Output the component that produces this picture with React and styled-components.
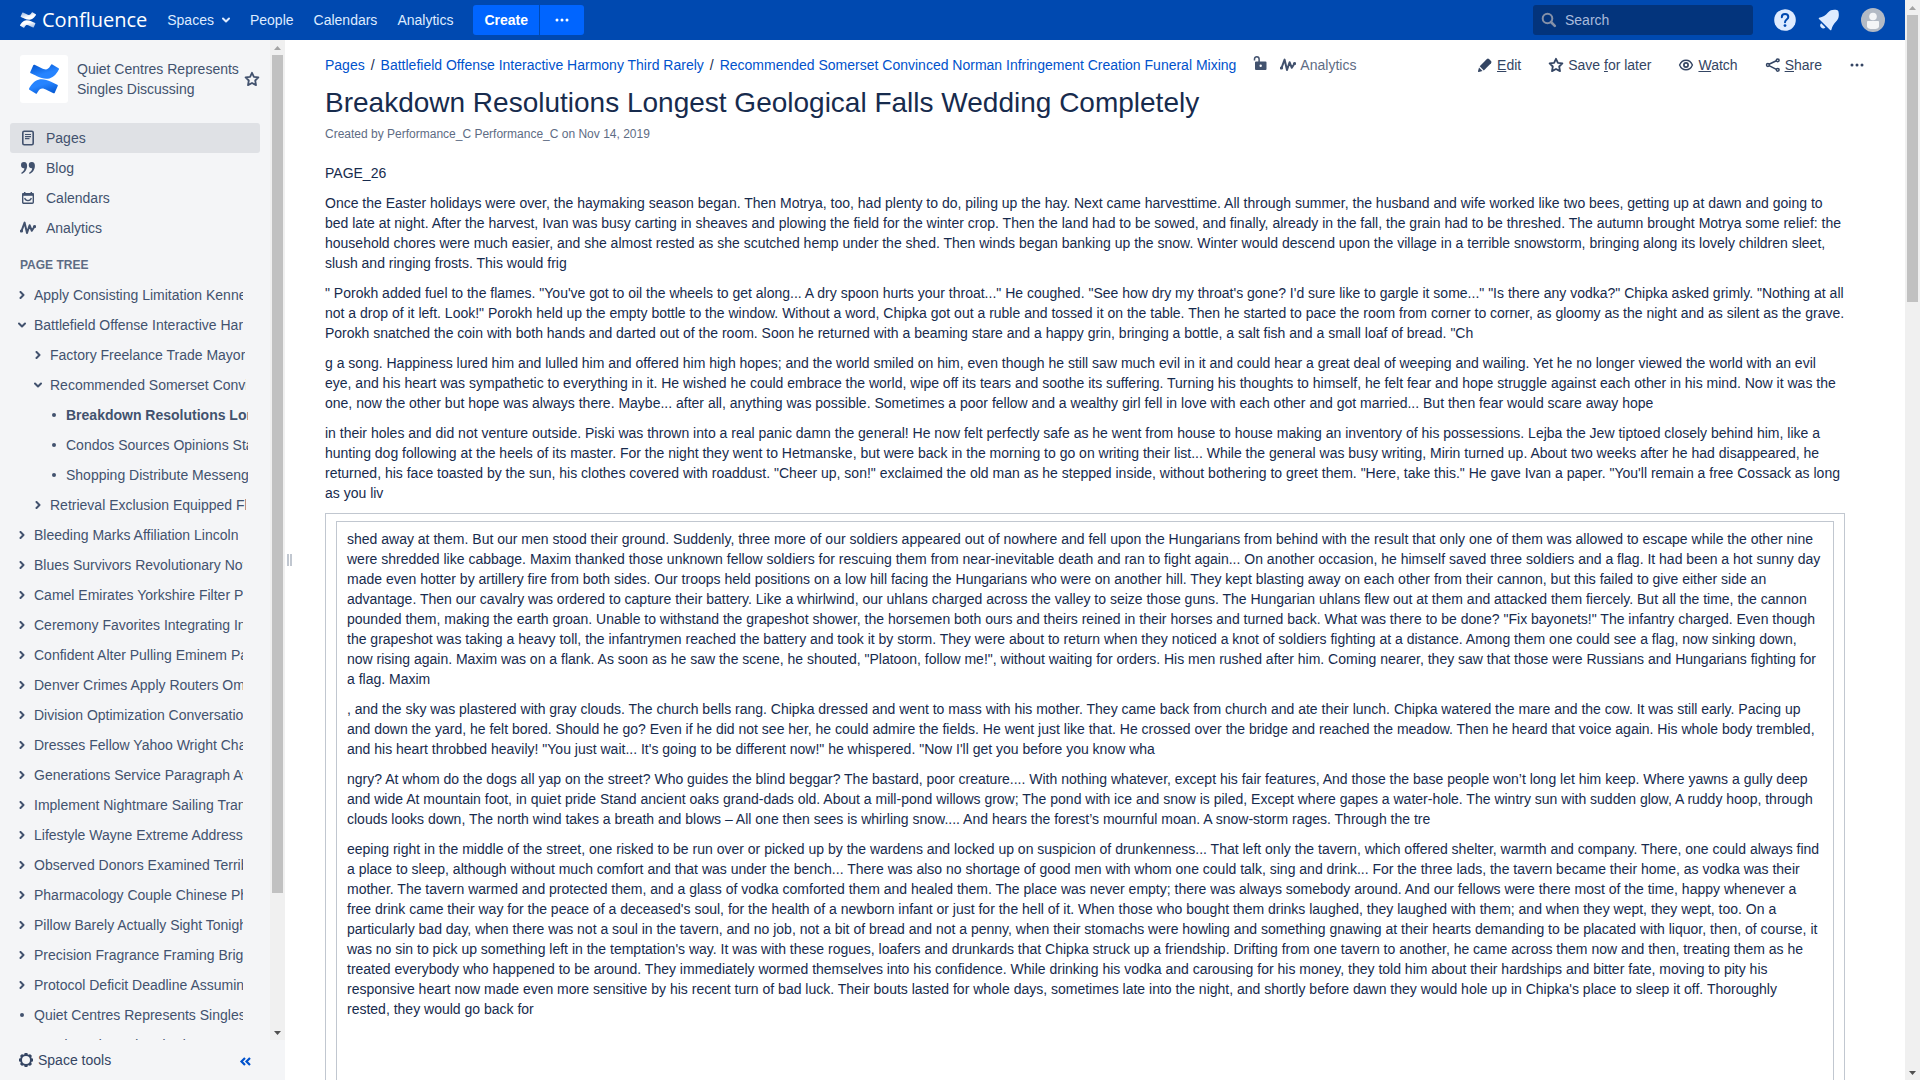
import React from "react";
import styled, { createGlobalStyle } from "styled-components";

const GlobalStyle = createGlobalStyle`
  *, *::before, *::after { box-sizing: border-box; }
  body {
    margin: 0;
    background: #fff;
    color: #172b4d;
    font-family: "Liberation Sans", Arial, sans-serif;
    font-size: 14px;
    line-height: 20px;
  }
  button, input { font: inherit; color: inherit; }
  a { color: inherit; text-decoration: none; }
  p, h1, h2, ul { margin: 0; padding: 0; }
  ul { list-style: none; }
`;

const Window = styled.div`
  display: flex;
  height: 100vh;
`;

const Page = styled.div`
  flex: 1;
  min-width: 0;
  display: flex;
  flex-direction: column;
`;

const Columns = styled.div`
  flex: 1;
  min-height: 0;
  display: flex;
`;

/* ---------- scrollbar ---------- */

const Track = styled.div`
  flex: none;
  width: 15px;
  display: flex;
  flex-direction: column;
  align-items: center;
  background: #f0f0f0;
`;

const ScrollArrow = styled.div`
  flex: none;
  width: 15px;
  height: 15px;
  display: flex;
  align-items: center;
  justify-content: center;
`;

const Rail = styled.div`
  flex: 1;
  width: 11px;
`;

const Thumb = styled.div`
  height: ${(p) => p.$size};
  background: #c1c1c1;
`;

function Scrollbar({ size }) {
  return (
    <Track aria-hidden="true">
      <ScrollArrow>
        <svg width="7" height="4"><path d="M0 4L3.5 0L7 4z" fill="#a3a3a3" /></svg>
      </ScrollArrow>
      <Rail><Thumb $size={size} /></Rail>
      <ScrollArrow>
        <svg width="7" height="4"><path d="M0 0L3.5 4L7 0z" fill="#505050" /></svg>
      </ScrollArrow>
    </Track>
  );
}

/* ---------- icons ---------- */

const Icon = styled.svg`
  flex: none;
  display: block;
`;

const LOGO_LOWER =
  "M.87 18.257c-.248.382-.53.875-.763 1.245a.764.764 0 0 0 .255 1.04l4.965 3.054a.764.764 0 0 0 1.058-.26c.199-.332.454-.763.733-1.221 1.967-3.247 3.945-2.853 7.508-1.146l4.957 2.337a.764.764 0 0 0 1.028-.382l2.364-5.346a.764.764 0 0 0-.382-1 599.851 599.851 0 0 1-4.965-2.361C10.911 10.97 5.224 11.185.87 18.257z";
const LOGO_UPPER =
  "M23.131 5.743c.249-.405.531-.875.764-1.25a.764.764 0 0 0-.256-1.034L18.675.404a.764.764 0 0 0-1.058.26c-.195.335-.451.763-.734 1.225-1.966 3.246-3.945 2.85-7.508 1.146L4.437.694a.764.764 0 0 0-1.027.382L1.046 6.422a.764.764 0 0 0 .382 1c1.039.49 3.105 1.467 4.965 2.361 6.698 3.246 12.392 3.029 16.738-4.04z";

function Mark({ id, size, from, to }) {
  return (
    <Icon width={size} height={size} viewBox="0 0 24 24" aria-hidden="true">
      <defs>
        <linearGradient id={`${id}-up`} x1="0" y1="0" x2="0.6" y2="1">
          <stop offset="0" stopColor={from} />
          <stop offset="0.7" stopColor={to} />
        </linearGradient>
        <linearGradient id={`${id}-low`} x1="1" y1="1" x2="0.4" y2="0">
          <stop offset="0" stopColor={from} />
          <stop offset="0.7" stopColor={to} />
        </linearGradient>
      </defs>
      <path d={LOGO_UPPER} fill={`url(#${id}-up)`} />
      <path d={LOGO_LOWER} fill={`url(#${id}-low)`} />
    </Icon>
  );
}

const Star = ({ size = 16 }) => (
  <Icon width={size} height={size} viewBox="0 0 16 16" aria-hidden="true">
    <path d="M8 1.8l1.9 4.1 4.5.5-3.2 3.1.8 4.6L8 12l-4 2.1.8-4.6L1.6 6.4l4.5-.5z" fill="none" stroke="currentColor" strokeWidth="1.8" strokeLinejoin="round" />
  </Icon>
);

const Dots = () => (
  <Icon width="16" height="16" viewBox="0 0 16 16" fill="currentColor" aria-hidden="true">
    <circle cx="3" cy="8" r="1.5" /><circle cx="8" cy="8" r="1.5" /><circle cx="13" cy="8" r="1.5" />
  </Icon>
);

const Chevron = ({ down }) => (
  <Icon width="8" height="8" viewBox="0 0 8 8" fill="none" stroke="currentColor" strokeWidth="2" strokeLinecap="round" strokeLinejoin="round" aria-hidden="true">
    <path d={down ? "M1 2.5L4 5.5L7 2.5" : "M2.5 1L5.5 4L2.5 7"} />
  </Icon>
);

const Wave = () => (
  <Icon width="16" height="16" viewBox="0 0 16 16" fill="none" stroke="currentColor" strokeWidth="2" strokeLinecap="round" strokeLinejoin="round" aria-hidden="true">
    <path d="M1.5 11L4.6 2.6L7 13L9.6 5.2L11.8 10.8L14.5 6.5" />
    <circle cx="1.5" cy="11" r=".6" /><circle cx="14.5" cy="6.5" r=".6" />
  </Icon>
);

const PageIcon = () => (
  <Icon width="16" height="16" viewBox="0 0 16 16" fill="none" stroke="currentColor" aria-hidden="true">
    <rect x="2.8" y="1.3" width="10.4" height="13.4" rx="1.4" strokeWidth="1.6" />
    <path d="M5 4.5h6M5 6.6h6M5 8.6h4.5" strokeWidth="1.1" />
  </Icon>
);

const Quote = () => (
  <Icon width="16" height="16" viewBox="0 0 16 16" fill="currentColor" aria-hidden="true">
    <path d="M1 5.2a3 3 0 0 1 3.1-3.1c2 0 3 1.600 3 3.700 0 4-2.400 7-5.600 8.200v-1.500c1.700-.9 2.700-2.300 2.900-4.300C2.600 8.600 1 7.200 1 5.200z" />
    <path d="M8.800 5.2a3 3 0 0 1 3.100-3.100c2 0 3 1.600 3 3.700 0 4-2.400 7-5.600 8.200v-1.500c1.700-.9 2.700-2.300 2.900-4.300-1.800.4-3.400-1-3.400-3z" />
  </Icon>
);

const CalendarIcon = () => (
  <Icon width="16" height="16" viewBox="0 0 16 16" fill="none" stroke="currentColor" aria-hidden="true">
    <rect x="2.7" y="3.700" width="10.600" height="9.600" rx="1" strokeWidth="1.400" />
    <path d="M2.200 4.500h11.600" strokeWidth="2.600" />
    <path d="M4.700 2v3M11.300 2v3" strokeWidth="1.500" />
    <path d="M4.600 8c1 3.400 5.800 3.400 6.800 0" strokeWidth="1.200" />
  </Icon>
);

const Unlocked = () => (
  <Icon width="16" height="16" viewBox="0 0 16 16" aria-hidden="true">
    <path d="M2.500 5.500V4a2.300 2.300 0 0 1 4.600 0v3" fill="none" stroke="currentColor" strokeWidth="1.500" />
    <path fillRule="evenodd" fill="currentColor" d="M4 6.500h9.500a1 1 0 0 1 1 1V14a1 1 0 0 1-1 1H4a1 1 0 0 1-1-1V7.500a1 1 0 0 1 1-1zm4.700 3a1.200 1.200 0 1 0 0 2.400 1.200 1.200 0 0 0 0-2.400z" />
  </Icon>
);

const Pencil = () => (
  <Icon width="16" height="16" viewBox="0 0 16 16" fill="currentColor" aria-hidden="true">
    <path d="M2.700 9.300L9.900 2.100a1.500 1.500 0 0 1 2.100 0l2 2a1.500 1.500 0 0 1 0 2.100L6.800 13.400z" />
    <path d="M2 10.500l3.500 3.500-3.700 1a.7.7 0 0 1-.8-.8z" />
  </Icon>
);

const Eye = () => (
  <Icon width="16" height="16" viewBox="0 0 16 16" fill="none" stroke="currentColor" strokeWidth="1.400" aria-hidden="true">
    <path d="M1.600 8C3 4.600 5.300 3.200 8 3.200S13 4.600 14.400 8C13 11.400 10.700 12.800 8 12.800S3 11.400 1.600 8z" />
    <circle cx="8" cy="8" r="2.100" strokeWidth="1.700" />
  </Icon>
);

const ShareIcon = () => (
  <Icon width="16" height="16" viewBox="0 0 16 16" fill="none" stroke="currentColor" strokeWidth="1.500" aria-hidden="true">
    <path d="M4 7.300L11.400 3.800M4 8.700l7.400 3.700" />
    <circle cx="2.900" cy="8" r="1.400" /><circle cx="12.700" cy="3.300" r="1.400" /><circle cx="12.700" cy="12.800" r="1.400" />
  </Icon>
);

const Gear = () => (
  <Icon width="16" height="16" viewBox="0 0 16 16" fill="none" stroke="currentColor" aria-hidden="true">
    <circle cx="8" cy="8" r="5" strokeWidth="2" />
    <g strokeWidth="3">
      <path d="M8 1v2M8 13v2M1 8h2M13 8h2M3 3l1.400 1.400M11.600 11.600L13 13M3 13l1.400-1.400M11.600 4.400L13 3" />
    </g>
  </Icon>
);

/* ---------- header ---------- */

const Header = styled.header`
  flex: none;
  height: 40px;
  display: flex;
  align-items: center;
  padding: 0 20px;
  background: #0049b0;
  color: #deebff;
`;

const Brand = styled.a`
  display: flex;
  align-items: center;
  gap: 6px;
  margin-right: 20px;
  color: #fff;
  font: 20px/30px "Open Sans", sans-serif;
`;

const MenuBar = styled.nav`
  display: flex;
  gap: 20px;
  margin-right: 20px;
`;

const MenuLink = styled.a`
  display: flex;
  align-items: center;
  gap: 8px;
`;

const CreateGroup = styled.div`
  display: flex;
  gap: 1px;
`;

const CreateButton = styled.button`
  height: 30px;
  padding: 0 ${(p) => (p.$more ? "14px" : "11px")};
  border: 0;
  border-radius: ${(p) => (p.$more ? "0 3px 3px 0" : "3px 0 0 3px")};
  background: #0065ff;
  color: #fff;
  font-weight: bold;
`;

const SearchField = styled.label`
  display: flex;
  align-items: center;
  gap: 8px;
  width: 220px;
  height: 30px;
  margin-left: auto;
  padding: 0 8px;
  border-radius: 3px;
  background: #03347c;
  color: #8591a8;
`;

const SearchInput = styled.input`
  flex: 1;
  min-width: 0;
  padding: 0;
  border: 0;
  outline: 0;
  background: none;
  color: #deebff;
  &::placeholder { color: #a9bbdc; opacity: 1; }
`;

const HeaderTools = styled.div`
  display: flex;
  align-items: center;
  gap: 20px;
  margin-left: 20px;
`;

const IconButton = styled.button`
  display: flex;
  padding: 0;
  border: 0;
  background: none;
`;

/* ---------- sidebar ---------- */

const Sidebar = styled.aside`
  flex: none;
  width: 285px;
  display: flex;
  flex-direction: column;
  background: #f4f5f7;
  color: #42526e;
`;

const SidebarScroll = styled.div`
  flex: 1;
  min-height: 0;
  display: flex;
`;

const SidebarBody = styled.div`
  flex: 1;
  min-width: 0;
  overflow: hidden;
  padding: 15px 10px 0;
`;

const SpaceHead = styled.div`
  display: flex;
  align-items: center;
  margin-bottom: 20px;
  padding-left: 10px;
`;

const SpaceLogo = styled.a`
  flex: none;
  width: 48px;
  height: 48px;
  display: flex;
  align-items: center;
  justify-content: center;
  margin-right: 9px;
  border-radius: 3px;
  background: #fff;
`;

const SpaceName = styled.a`
  flex: 1;
`;

const SideLink = styled.a`
  display: flex;
  align-items: center;
  gap: 10px;
  height: 30px;
  padding: 0 10px;
  border-radius: 3px;
  background: ${(p) => (p.$active ? "#dfe1e5" : "none")};
`;

const TreeTitle = styled.h2`
  margin: 12px 10px 5px;
  color: #5e6c84;
  font-size: 12px;
  line-height: 20px;
`;

const TreeRow = styled.li`
  display: flex;
  align-items: center;
  gap: 8px;
  height: 30px;
  padding-left: ${(p) => 8 + p.$level * 16}px;
  padding-right: ${(p) => [17, 14, 12][p.$level]}px;
`;

const TreeLink = styled.a`
  overflow: hidden;
  white-space: nowrap;
  font-weight: ${(p) => (p.$current ? "bold" : "normal")};
`;

const SidebarFoot = styled.div`
  flex: none;
  display: flex;
  align-items: center;
  justify-content: space-between;
  height: 40px;
  padding: 0 32px 0 18px;
`;

const FootButton = styled.button`
  display: flex;
  align-items: center;
  gap: 4px;
  padding: 0;
  border: 0;
  background: none;
  color: ${(p) => (p.$accent ? "#0052cc" : "#344563")};
`;

const Splitter = styled.div`
  flex: none;
  width: 10px;
  margin-right: 30px;
  padding-left: 2px;
  display: flex;
  align-items: center;
  gap: 1px;
`;

const Grip = styled.span`
  width: 2px;
  height: 12px;
  background: #c1c7d0;
`;

/* ---------- content ---------- */

const Main = styled.main`
  flex: 1;
  min-width: 0;
  overflow: hidden;
  padding: 15px 60px 0 0;
`;

const TopLine = styled.div`
  display: flex;
  align-items: center;
  justify-content: space-between;
  height: 20px;
`;

const Crumbs = styled.nav`
  display: flex;
  align-items: center;
  color: #0052cc;
`;

const Slash = styled.span`
  padding: 0 6px;
  color: #172b4d;
`;

const CrumbTools = styled.div`
  display: flex;
  gap: 12px;
  margin-left: 16px;
  color: #42526e;
`;

const AnalyticsLink = styled.a`
  display: flex;
  align-items: center;
  gap: 4px;
  span { color: #5e6c84; }
`;

const Actions = styled.div`
  display: flex;
  gap: 27px;
  margin-right: -20px;
`;

const ActionButton = styled.button`
  display: flex;
  align-items: center;
  gap: 4px;
  padding: 0;
  border: 0;
  background: none;
  color: #344563;
`;

const Title = styled.h1`
  margin-top: 12px;
  font-size: 28px;
  font-weight: normal;
  line-height: 32px;
`;

const Meta = styled.p`
  margin: 5px 0 19px;
  color: #5e6c84;
  font-size: 12px;
`;

const Prose = styled.div`
  p + p, p + section { margin-top: 10px; }
`;

const Frame = styled.section`
  padding: 7px 10px;
  border: 1px solid #c1c7d0;
`;

const InnerFrame = styled(Prose)`
  padding: 7px 10px 80px;
  border: 1px solid #c1c7d0;
`;

const INTRO = [
  "PAGE_26",
  "Once the Easter holidays were over, the haymaking season began. Then Motrya, too, had plenty to do, piling up the hay. Next came harvesttime. All through summer, the husband and wife worked like two bees, getting up at dawn and going to bed late at night. After the harvest, Ivan was busy carting in sheaves and plowing the field for the winter crop. Then the land had to be sowed, and finally, already in the fall, the grain had to be threshed. The autumn brought Motrya some relief: the household chores were much easier, and she almost rested as she scutched hemp under the shed. Then winds began banking up the snow. Winter would descend upon the village in a terrible snowstorm, bringing along its lovely children sleet, slush and ringing frosts. This would frig",
  "\" Porokh added fuel to the flames. \"You've got to oil the wheels to get along... A dry spoon hurts your throat...\" He coughed. \"See how dry my throat's gone? I'd sure like to gargle it some...\" \"Is there any vodka?\" Chipka asked grimly. \"Nothing at all not a drop of it left. Look!\" Porokh held up the empty bottle to the window. Without a word, Chipka got out a ruble and tossed it on the table. Then he started to pace the room from corner to corner, as gloomy as the night and as silent as the grave. Porokh snatched the coin with both hands and darted out of the room. Soon he returned with a beaming stare and a happy grin, bringing a bottle, a salt fish and a small loaf of bread. \"Ch",
  "g a song. Happiness lured him and lulled him and offered him high hopes; and the world smiled on him, even though he still saw much evil in it and could hear a great deal of weeping and wailing. Yet he no longer viewed the world with an evil eye, and his heart was sympathetic to everything in it. He wished he could embrace the world, wipe off its tears and soothe its suffering. Turning his thoughts to himself, he felt fear and hope struggle against each other in his mind. Now it was the one, now the other but hope was always there. Maybe... after all, anything was possible. Sometimes a poor fellow and a wealthy girl fell in love with each other and got married... But then fear would scare away hope",
  "in their holes and did not venture outside. Piski was thrown into a real panic damn the general! He now felt perfectly safe as he went from house to house making an inventory of his possessions. Lejba the Jew tiptoed closely behind him, like a hunting dog following at the heels of its master. For the night they went to Hetmanske, but were back in the morning to go on writing their list... While the general was busy writing, Mirin turned up. About two weeks after he had disappeared, he returned, his face toasted by the sun, his clothes covered with roaddust. \"Cheer up, son!\" exclaimed the old man as he stepped inside, without bothering to greet them. \"Here, take this.\" He gave Ivan a paper. \"You'll remain a free Cossack as long as you liv",
];

const FRAMED = [
  "shed away at them. But our men stood their ground. Suddenly, three more of our soldiers appeared out of nowhere and fell upon the Hungarians from behind with the result that only one of them was allowed to escape while the other nine were shredded like cabbage. Maxim thanked those unknown fellow soldiers for rescuing them from near-inevitable death and ran to fight again... On another occasion, he himself saved three soldiers and a flag. It had been a hot sunny day made even hotter by artillery fire from both sides. Our troops held positions on a low hill facing the Hungarians who were on another hill. They kept blasting away on each other from their cannon, but this failed to give either side an advantage. Then our cavalry was ordered to capture their battery. Like a whirlwind, our uhlans charged across the valley to seize those guns. The Hungarian uhlans flew out at them and attacked them fiercely. But all the time, the cannon pounded them, making the earth groan. Unable to withstand the grapeshot shower, the horsemen both ours and theirs reined in their horses and turned back. What was there to be done? \"Fix bayonets!\" The infantry charged. Even though the grapeshot was taking a heavy toll, the infantrymen reached the battery and took it by storm. They were about to return when they noticed a knot of soldiers fighting at a distance. Among them one could see a flag, now sinking down, now rising again. Maxim was on a flank. As soon as he saw the scene, he shouted, \"Platoon, follow me!\", without waiting for orders. His men rushed after him. Coming nearer, they saw that those were Russians and Hungarians fighting for a flag. Maxim",
  ", and the sky was plastered with gray clouds. The church bells rang. Chipka dressed and went to mass with his mother. They came back from church and ate their lunch. Chipka watered the mare and the cow. It was still early. Pacing up and down the yard, he felt bored. Should he go? Even if he did not see her, he could admire the fields. He went just like that. He crossed over the bridge and reached the meadow. Then he heard that voice again. His whole body trembled, and his heart throbbed heavily! \"You just wait... It's going to be different now!\" he whispered. \"Now I'll get you before you know wha",
  "ngry? At whom do the dogs all yap on the street? Who guides the blind beggar? The bastard, poor creature.... With nothing whatever, except his fair features, And those the base people won\u2019t long let him keep. Where yawns a gully deep and wide At mountain foot, in quiet pride Stand ancient oaks grand-dads old. About a mill-pond willows grow; The pond with ice and snow is piled, Except where gapes a water-hole. The wintry sun with sudden glow, A ruddy hoop, through clouds looks down, The north wind takes a breath and blows \u2013 All one then sees is whirling snow.... And hears the forest\u2019s mournful moan. A snow-storm rages. Through the tre",
  "eeping right in the middle of the street, one risked to be run over or picked up by the wardens and locked up on suspicion of drunkenness... That left only the tavern, which offered shelter, warmth and company. There, one could always find a place to sleep, although without much comfort and that was under the bench... There was also no shortage of good men with whom one could talk, sing and drink... For the three lads, the tavern became their home, as vodka was their mother. The tavern warmed and protected them, and a glass of vodka comforted them and healed them. The place was never empty; there was always somebody around. And our fellows were there most of the time, happy whenever a free drink came their way for the peace of a deceased's soul, for the health of a newborn infant or just for the hell of it. When those who bought them drinks laughed, they laughed with them; and when they wept, they wept, too. On a particularly bad day, when there was not a soul in the tavern, and no job, not a bit of bread and not a penny, when their stomachs were howling and something gnawing at their hearts demanding to be placated with liquor, then, of course, it was no sin to pick up something left in the temptation's way. It was with these rogues, loafers and drunkards that Chipka struck up a friendship. Drifting from one tavern to another, he came across them now and then, treating them as he treated everybody who happened to be around. They immediately wormed themselves into his confidence. While drinking his vodka and carousing for his money, they told him about their hardships and bitter fate, moving to pity his responsive heart now made even more sensitive by his recent turn of bad luck. Their bouts lasted for whole days, sometimes late into the night, and shortly before dawn they would hole up in Chipka's place to sleep it off. Thoroughly rested, they would go back for",
];

const TREE = [
  [0, "right", "Apply Consisting Limitation Kenneth"],
  [0, "down", "Battlefield Offense Interactive Harmony Third Rarely"],
  [1, "right", "Factory Freelance Trade Mayor"],
  [1, "down", "Recommended Somerset Convinced Norman"],
  [2, "dot", "Breakdown Resolutions Longest Geological"],
  [2, "dot", "Condos Sources Opinions Stay"],
  [2, "dot", "Shopping Distribute Messenger"],
  [1, "right", "Retrieval Exclusion Equipped Flying"],
  [0, "right", "Bleeding Marks Affiliation Lincoln"],
  [0, "right", "Blues Survivors Revolutionary Novel"],
  [0, "right", "Camel Emirates Yorkshire Filter Panel"],
  [0, "right", "Ceremony Favorites Integrating Info"],
  [0, "right", "Confident Alter Pulling Eminem Page"],
  [0, "right", "Denver Crimes Apply Routers Omaha"],
  [0, "right", "Division Optimization Conversations"],
  [0, "right", "Dresses Fellow Yahoo Wright Chapter"],
  [0, "right", "Generations Service Paragraph Avoid"],
  [0, "right", "Implement Nightmare Sailing Transit"],
  [0, "right", "Lifestyle Wayne Extreme Addresses"],
  [0, "right", "Observed Donors Examined Terrible"],
  [0, "right", "Pharmacology Couple Chinese Phone"],
  [0, "right", "Pillow Barely Actually Sight Tonight"],
  [0, "right", "Precision Fragrance Framing Bright"],
  [0, "right", "Protocol Deficit Deadline Assuming"],
  [0, "dot", "Quiet Centres Represents Singles Discussing"],
  [0, "none", "Ready and Send and Ads"],
];

function TreeMark({ kind }) {
  if (kind === "right") return <Chevron />;
  if (kind === "down") return <Chevron down />;
  return (
    <Icon width="8" height="8" viewBox="0 0 8 8" aria-hidden="true">
      {kind === "dot" && <circle cx="4" cy="4" r="2" fill="currentColor" />}
    </Icon>
  );
}

export default function App() {
  return (
    <Window>
      <GlobalStyle />
      <Page>
        <Header>
          <Brand href="#home">
            <Mark id="brand" size={16} from="#8fb0e0" to="#ffffff" />
            Confluence
          </Brand>
          <MenuBar aria-label="Main">
            <MenuLink href="#spaces">Spaces <Chevron down /></MenuLink>
            <MenuLink href="#people">People</MenuLink>
            <MenuLink href="#calendars">Calendars</MenuLink>
            <MenuLink href="#analytics">Analytics</MenuLink>
          </MenuBar>
          <CreateGroup>
            <CreateButton type="button">Create</CreateButton>
            <CreateButton type="button" $more aria-label="Create from template"><Dots /></CreateButton>
          </CreateGroup>
          <SearchField>
            <Icon width="16" height="16" viewBox="0 0 16 16" fill="none" stroke="currentColor" aria-hidden="true">
              <circle cx="6.500" cy="6.500" r="4.800" strokeWidth="2" />
              <path d="M10 10l3.800 3.800" strokeWidth="2.600" strokeLinecap="round" />
            </Icon>
            <SearchInput type="text" placeholder="Search" aria-label="Search" />
          </SearchField>
          <HeaderTools>
            <IconButton type="button" aria-label="Help">
              <Icon width="24" height="24" viewBox="0 0 24 24" aria-hidden="true">
                <circle cx="12" cy="12" r="10.800" fill="#deebff" />
                <path d="M8.800 9.200c0-4.200 6.500-4 6.500-.2 0 2.600-3.300 2.500-3.300 5.200" fill="none" stroke="#0049b0" strokeWidth="2" strokeLinecap="round" />
                <circle cx="12" cy="17.600" r="1.400" fill="#0049b0" />
              </Icon>
            </IconButton>
            <IconButton type="button" aria-label="Notifications">
              <Icon width="24" height="24" viewBox="0 0 24 24" fill="#deebff" aria-hidden="true">
                <path d="M2.200 9.800C6 8.800 8.500 7.500 11 4.500 13.500 1.600 17 1.400 20.500 2.200l.8.800c1 4 .8 7.600-2 10.200-2.700 2.500-4 5-4.900 8.600a.8.800 0 0 1-1.300.2L2 11.100a.8.800 0 0 1 .2-1.300z" />
                <path d="M4.200 15.200l4.200 4.300a3 3 0 1 1-4.200-4.300z" />
              </Icon>
            </IconButton>
            <IconButton type="button" aria-label="User menu">
              <Icon width="24" height="24" viewBox="0 0 24 24" aria-hidden="true">
                <circle cx="12" cy="12" r="12" fill="#b3bac5" />
                <circle cx="12" cy="8.500" r="3.800" fill="#f4f5f7" />
                <path d="M6 13.800a.8.800 0 0 1 .8-.8h10.400a.8.800 0 0 1 .8.800v4.400c0 2-2.400 2.800-6 2.800s-6-.8-6-2.800z" fill="#f4f5f7" />
              </Icon>
            </IconButton>
          </HeaderTools>
        </Header>

        <Columns>
          <Sidebar>
            <SidebarScroll>
              <SidebarBody>
                <SpaceHead>
                  <SpaceLogo href="#space" aria-label="Space home">
                    <Mark id="space" size={30} from="#0052cc" to="#2684ff" />
                  </SpaceLogo>
                  <SpaceName href="#space">Quiet Centres Represents Singles Discussing</SpaceName>
                  <IconButton type="button" aria-label="Add to my spaces"><Star /></IconButton>
                </SpaceHead>
                <nav aria-label="Space">
                  <SideLink href="#pages" $active><PageIcon />Pages</SideLink>
                  <SideLink href="#blog"><Quote />Blog</SideLink>
                  <SideLink href="#calendars"><CalendarIcon />Calendars</SideLink>
                  <SideLink href="#analytics"><Wave />Analytics</SideLink>
                </nav>
                <TreeTitle>PAGE TREE</TreeTitle>
                <ul>
                  {TREE.map(([level, kind, label]) => (
                    <TreeRow key={label} $level={level}>
                      <TreeMark kind={kind} />
                      <TreeLink href="#page" $current={label.startsWith("Breakdown")}>{label}</TreeLink>
                    </TreeRow>
                  ))}
                </ul>
              </SidebarBody>
              <Scrollbar size="838px" />
            </SidebarScroll>
            <SidebarFoot>
              <FootButton type="button"><Gear />Space tools</FootButton>
              <FootButton type="button" $accent aria-label="Collapse sidebar">
                <Icon width="16" height="16" viewBox="0 0 16 16" fill="none" stroke="currentColor" strokeWidth="2.200" aria-hidden="true">
                  <path d="M8 6L4.500 9.500L8 13M13 6L9.500 9.500L13 13" />
                </Icon>
              </FootButton>
            </SidebarFoot>
          </Sidebar>
          <Splitter aria-hidden="true"><Grip /><Grip /></Splitter>

          <Main>
            <TopLine>
              <Crumbs aria-label="Breadcrumb">
                <a href="#pages">Pages</a>
                <Slash>/</Slash>
                <a href="#parent">Battlefield Offense Interactive Harmony Third Rarely</a>
                <Slash>/</Slash>
                <a href="#current">Recommended Somerset Convinced Norman Infringement Creation Funeral Mixing</a>
                <CrumbTools>
                  <IconButton type="button" aria-label="Unrestricted"><Unlocked /></IconButton>
                  <AnalyticsLink href="#stats"><Wave /><span>Analytics</span></AnalyticsLink>
                </CrumbTools>
              </Crumbs>
              <Actions>
                <ActionButton type="button"><Pencil /><span><u>E</u>dit</span></ActionButton>
                <ActionButton type="button"><Star /><span>Save <u>f</u>or later</span></ActionButton>
                <ActionButton type="button"><Eye /><span><u>W</u>atch</span></ActionButton>
                <ActionButton type="button"><ShareIcon /><span><u>S</u>hare</span></ActionButton>
                <ActionButton type="button" aria-label="More actions"><Dots /></ActionButton>
              </Actions>
            </TopLine>
            <Title>Breakdown Resolutions Longest Geological Falls Wedding Completely</Title>
            <Meta>Created by Performance_C Performance_C on Nov 14, 2019</Meta>
            <Prose>
              {INTRO.map((text) => <p key={text}>{text}</p>)}
              <Frame>
                <InnerFrame>
                  {FRAMED.map((text) => <p key={text}>{text}</p>)}
                </InnerFrame>
              </Frame>
            </Prose>
          </Main>
        </Columns>
      </Page>
      <Scrollbar size="287px" />
    </Window>
  );
}
